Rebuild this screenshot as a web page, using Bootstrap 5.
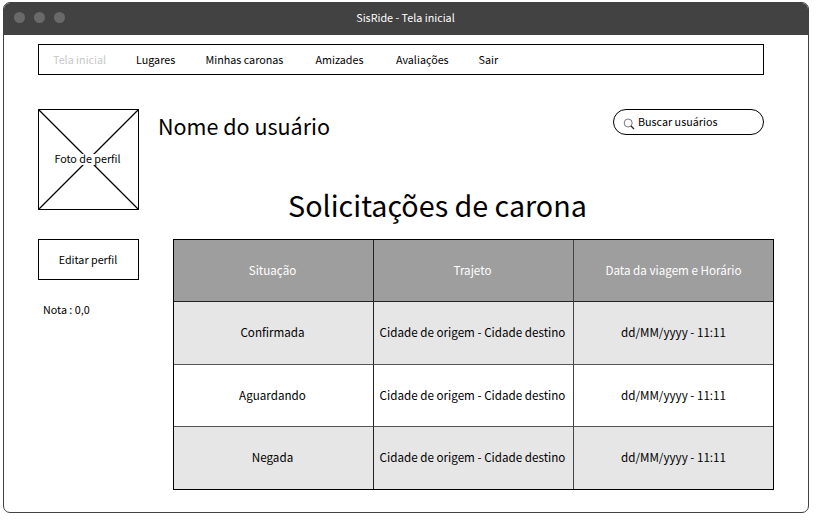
<!DOCTYPE html>
<html lang="pt-BR">
<head>
<meta charset="utf-8">
<meta name="viewport" content="width=device-width, initial-scale=1">
<title>SisRide - Tela inicial</title>
<link href="https://cdn.jsdelivr.net/npm/bootstrap@5.3.0/dist/css/bootstrap.min.css" rel="stylesheet">
<style>
body{font-family:"Noto Sans CJK SC","Noto Sans",sans-serif;font-size:10.75px;line-height:16px;color:#000;background:#fff;height:521px;padding:2px 7px 8px 3px;overflow:hidden}
.window-frame{width:806px;height:511px;border:1px solid #424242;border-radius:7px;overflow:hidden}
.title-bar{height:32px;background:#424242;color:#fff;flex:none}
.win-title{padding:0 1px 2px 0}
.dots{width:81px;padding-left:10px;gap:9px;margin-top:-4px}
.dots span{width:11px;height:11px;border-radius:50%;background:#696969}
.content{padding:9px 34px 0}
.line-box{border:1px solid #000}
.menu-bar{width:726px;height:31px;padding:0 14px;display:grid;grid-template-columns:83px 69.5px 110px 80.5px 82.5px auto;align-items:center}
.menu-bar a{color:#000}
.menu-bar a.active{color:#c8c8c8}
.page-body{margin-top:34px}
.profile-col{width:101px}
.photo{height:101px}
.photo svg{width:99px;height:99px}
.edit-btn{height:41px;margin-top:29px;font-size:10.75px;line-height:16px;padding:0 1px 0 0}
.rating{margin-top:22px;padding-left:5px}
.main-col{width:635px}
.user-row{padding-left:19px;width:625px;height:75px}
.user-name{font-size:21.5px;line-height:34px;margin:0}
.search-box{width:151px;height:26px;padding-left:9px;gap:3px;border-radius:13px}
.page-title{font-size:28.7px;line-height:44px;margin:-1px 0 12px;padding-right:38px}
.rides{width:601px;height:251px;margin:0 0 0 34px;border-collapse:separate;border-spacing:0;table-layout:fixed;border:1px solid #000;color:#000;font-size:11.65px}
.rides th:first-child{width:199px}
.rides th:nth-child(2){width:200px}
.rides>:not(caption)>*>*{padding:0 2px 2px 0;border:0 solid #222;background:#fff;text-align:center;vertical-align:middle;font-weight:400;box-shadow:none}
.rides>:not(caption)>*>*+*{border-left-width:1px}
.rides>:not(caption)>*>*+*+*{border-left-color:#444;padding-right:0}
.rides>tbody>*>*{border-top:1px solid #555;height:62.5px}
.rides>tbody>:nth-child(2)>*{padding-bottom:0}
.rides>thead>*>*{background:#9e9e9e;color:#fff;height:61px}
.rides>tbody>:nth-child(odd)>*{background:#e6e6e6}
.rides>tbody>:first-child>*{border-top-color:#222}
</style>
</head>
<body>
<div class="window-frame d-flex flex-column">
  <header class="title-bar d-flex align-items-center">
    <div class="dots d-flex"><span></span><span></span><span></span></div>
    <div class="flex-grow-1 text-center win-title">SisRide - Tela inicial</div>
    <div class="dots"></div>
  </header>
  <main class="content">
    <nav class="menu-bar line-box">
      <a class="active text-decoration-none" href="#">Tela inicial</a>
      <a class="text-decoration-none" href="#">Lugares</a>
      <a class="text-decoration-none" href="#">Minhas caronas</a>
      <a class="text-decoration-none" href="#">Amizades</a>
      <a class="text-decoration-none" href="#">Avaliações</a>
      <a class="text-decoration-none" href="#">Sair</a>
    </nav>
    <div class="page-body d-flex">
      <aside class="profile-col flex-shrink-0">
        <div class="photo line-box">
          <svg viewBox="0 0 99 99" class="d-block"><path d="M0 0 99 99M99 0 0 99" stroke="#000" stroke-width="1.3"/><rect x="15" y="44" width="69" height="11" fill="#fff"/><text x="48.5" y="53" text-anchor="middle" font-size="10.75">Foto de perfil</text></svg>
        </div>
        <button class="btn edit-btn line-box rounded-0 w-100 text-black bg-white">Editar perfil</button>
        <div class="rating">Nota : 0,0</div>
      </aside>
      <section class="main-col">
        <div class="user-row d-flex justify-content-between align-items-start">
          <h2 class="user-name fw-normal">Nome do usuário</h2>
          <div class="search-box line-box d-flex align-items-center">
            <svg class="mt-1" width="12" height="12" viewBox="0 0 12 12" fill="none" stroke="#555" stroke-width=".8"><circle cx="5.2" cy="5" r="4"/><path d="m8 8 3 3" stroke="#222" stroke-width="1.2"/></svg>
            <span>Buscar usuários</span>
          </div>
        </div>
        <h1 class="page-title fw-normal text-center">Solicitações de carona</h1>
        <table class="table rides">
          <thead><tr><th>Situação</th><th>Trajeto</th><th>Data da viagem e Horário</th></tr></thead>
          <tbody>
            <tr><td>Confirmada</td><td>Cidade de origem - Cidade destino</td><td>dd/MM/yyyy - 11:11</td></tr>
            <tr><td>Aguardando</td><td>Cidade de origem - Cidade destino</td><td>dd/MM/yyyy - 11:11</td></tr>
            <tr><td>Negada</td><td>Cidade de origem - Cidade destino</td><td>dd/MM/yyyy - 11:11</td></tr>
          </tbody>
        </table>
      </section>
    </div>
  </main>
</div>
<script src="https://cdn.jsdelivr.net/npm/bootstrap@5.3.0/dist/js/bootstrap.bundle.min.js"></script>
</body>
</html>
